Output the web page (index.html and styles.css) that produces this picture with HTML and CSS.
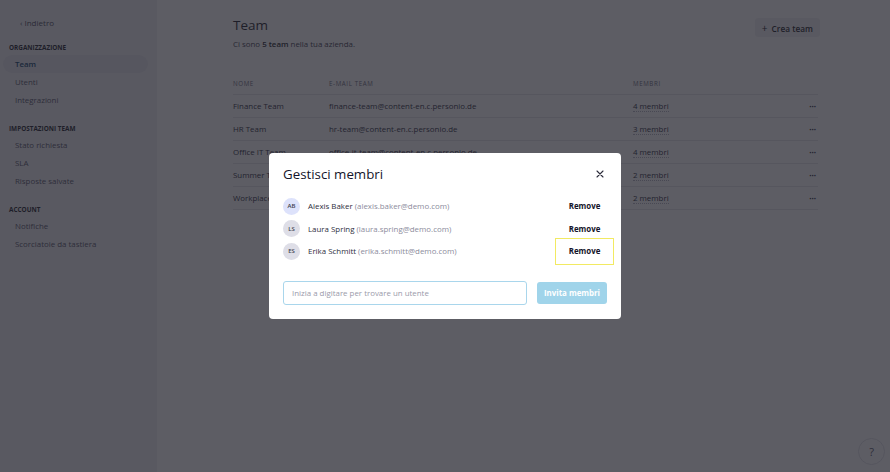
FILE: index.html
```html
<!DOCTYPE html>
<html lang="it">
<head>
<meta charset="utf-8">
<title>Team</title>
<link rel="stylesheet" href="styles.css">
</head>
<body>
<div class="app">
  <aside class="sidebar">
    <a class="back">‹ Indietro</a>
    <div class="section-title">ORGANIZZAZIONE</div>
    <a class="nav-item active">Team</a>
    <a class="nav-item">Utenti</a>
    <a class="nav-item">Integrazioni</a>
    <div class="section-title">IMPOSTAZIONI TEAM</div>
    <a class="nav-item">Stato richiesta</a>
    <a class="nav-item">SLA</a>
    <a class="nav-item">Risposte salvate</a>
    <div class="section-title">ACCOUNT</div>
    <a class="nav-item">Notifiche</a>
    <a class="nav-item">Scorciatoie da tastiera</a>
  </aside>
  <main class="main">
    <div class="header">
      <div>
        <h1 class="title">Team</h1>
        <p class="subtitle">Ci sono <b>5 team</b> nella tua azienda.</p>
      </div>
      <button class="create-btn"><span class="plus">+</span> Crea team</button>
    </div>
    <div class="table">
      <div class="row head">
        <div class="c-name">NOME</div>
        <div class="c-mail">E-MAIL TEAM</div>
        <div class="c-mem">MEMBRI</div>
        <div class="c-act"></div>
      </div>
      <div class="row">
        <div class="c-name">Finance Team</div>
        <div class="c-mail">finance-team@content-en.c.personio.de</div>
        <div class="c-mem"><span class="dotted">4 membri</span></div>
        <div class="c-act">···</div>
      </div>
      <div class="row">
        <div class="c-name">HR Team</div>
        <div class="c-mail">hr-team@content-en.c.personio.de</div>
        <div class="c-mem"><span class="dotted">3 membri</span></div>
        <div class="c-act">···</div>
      </div>
      <div class="row">
        <div class="c-name">Office IT Team</div>
        <div class="c-mail">office-it-team@content-en.c.personio.de</div>
        <div class="c-mem"><span class="dotted">4 membri</span></div>
        <div class="c-act">···</div>
      </div>
      <div class="row">
        <div class="c-name">Summer Team</div>
        <div class="c-mail">summer-team@content-en.c.personio.de</div>
        <div class="c-mem"><span class="dotted">2 membri</span></div>
        <div class="c-act">···</div>
      </div>
      <div class="row">
        <div class="c-name">Workplace Team</div>
        <div class="c-mail">workplace-team@content-en.c.personio.de</div>
        <div class="c-mem"><span class="dotted">2 membri</span></div>
        <div class="c-act">···</div>
      </div>
    </div>
  </main>
</div>
<div class="help">?</div>

<div class="overlay">
  <div class="modal">
    <div class="modal-head">
      <h2 class="modal-title">Gestisci membri</h2>
      <button class="close" aria-label="Chiudi">
        <svg width="8" height="8" viewBox="0 0 8 8"><path d="M1 1L7 7M7 1L1 7" stroke="#2b2b3a" stroke-width="1.1" stroke-linecap="round"/></svg>
      </button>
    </div>
    <ul class="members">
      <li class="member">
        <span class="avatar blue">AB</span>
        <span class="m-name">Alexis Baker <span class="m-mail">(alexis.baker@demo.com)</span></span>
        <button class="remove">Remove</button>
      </li>
      <li class="member">
        <span class="avatar">LS</span>
        <span class="m-name">Laura Spring <span class="m-mail">(laura.spring@demo.com)</span></span>
        <button class="remove">Remove</button>
      </li>
      <li class="member">
        <span class="avatar">ES</span>
        <span class="m-name">Erika Schmitt <span class="m-mail">(erika.schmitt@demo.com)</span></span>
        <button class="remove focus">Remove</button>
      </li>
    </ul>
    <div class="invite">
      <input class="search" type="text" placeholder="Inizia a digitare per trovare un utente">
      <button class="invite-btn">Invita membri</button>
    </div>
  </div>
</div>
</body>
</html>
```

FILE: styles.css
```css
* { box-sizing: border-box; }
html, body { margin: 0; padding: 0; }
body {
  width: 890px;
  height: 472px;
  overflow: hidden;
  font-family: "Open Sans", "Liberation Sans", sans-serif;
  color: #1e1e2c;
  background: #fff;
  position: relative;
}
.app { display: flex; height: 472px; }

.sidebar {
  width: 157px;
  flex: none;
  background: #f1f1f4;
  padding: 16px 0 0 0;
  display: flex;
  flex-direction: column;
}
.back {
  font-size: 8px;
  color: #4a4a5a;
  padding-left: 20px;
  height: 13px;
  line-height: 13px;
  margin-bottom: 12px;
}
.section-title {
  font-size: 6.4px;
  font-weight: 700;
  color: #1e1e2c;
  padding-left: 9px;
  height: 9px;
  line-height: 9px;
  margin-top: 2px;
  margin-bottom: 2.5px;
}
.section-title ~ .section-title { margin-top: 15.5px; }
.nav-item {
  font-size: 7.9px;
  color: #55556a;
  height: 18px;
  line-height: 18px;
  margin: 0 9px 0 3px;
  border-radius: 9px;
  padding-left: 12px;
}
.nav-item.active {
  background: #e6e6ec;
  color: #10436d;
  font-weight: 600;
}

.main {
  flex: 1;
  padding: 15px 70px 0 76px;
}
.header {
  display: flex;
  justify-content: space-between;
  align-items: flex-start;
  height: 58px;
}
.title {
  margin: 0;
  font-size: 13.5px;
  font-weight: 400;
  line-height: 20px;
  color: #1e1e2c;
}
.subtitle {
  margin: 4px 0 0;
  font-size: 7.9px;
  line-height: 11px;
  color: #3e3e50;
}
.subtitle b { font-weight: 600; color: #1e1e2c; }
.create-btn {
  margin-top: 3px;
  height: 19px;
  padding: 0 7px 0 7px;
  border: 0;
  border-radius: 3px;
  background: #f1f1f4;
  font-family: inherit;
  font-size: 8.3px;
  font-weight: 600;
  color: #1e1e2c;
}
.create-btn .plus { font-weight: 400; font-size: 10px; margin-right: 2px; }

.table { display: flex; flex-direction: column; margin-right: 2px; }
.row {
  display: flex;
  align-items: center;
  height: 23px;
  border-bottom: 1px solid #e6e6ea;
  font-size: 7.9px;
  color: #2e2e3e;
}
.row.head {
  height: 22px;
  font-size: 6.2px;
  letter-spacing: 0.6px;
  color: #6a6a7c;
  font-weight: 500;
}
.c-name { width: 96px; }
.c-mail { width: 304px; }
.c-mem { flex: 1; }
.c-act { width: 20px; text-align: right; font-weight: 700; font-size: 8px; padding-right: 2px; }
.dotted { border-bottom: 1px dotted #b4b4c0; }

.help {
  position: absolute;
  left: 858px;
  top: 438px;
  width: 27px;
  height: 27px;
  border-radius: 50%;
  background: #fff;
  border: 1px solid #e2e2e8;
  display: flex;
  align-items: center;
  justify-content: center;
  font-size: 11px;
  color: #55556a;
}

.overlay {
  position: absolute;
  inset: 0;
  background: rgba(30, 30, 40, 0.72);
  display: flex;
  align-items: center;
  justify-content: center;
}
.modal {
  width: 352px;
  height: 166px;
  background: #fff;
  border-radius: 4px;
  padding: 11px 8px 14px 14px;
  display: flex;
  flex-direction: column;
}
.modal-head {
  display: flex;
  justify-content: space-between;
  align-items: center;
  height: 20px;
}
.modal-title {
  margin: 0;
  font-size: 13.3px;
  font-weight: 500;
  color: #14142a;
}
.close {
  border: 0;
  background: none;
  padding: 0;
  width: 14px;
  height: 14px;
  display: flex;
  align-items: center;
  justify-content: center;
  margin-right: 6px;
}
.members {
  list-style: none;
  margin: 11px 0 0;
  padding: 0;
}
.member {
  display: flex;
  align-items: center;
  height: 22.5px;
}
.avatar {
  width: 17px;
  height: 17px;
  border-radius: 50%;
  background: #dedee7;
  font-size: 6px;
  line-height: 1;
  font-weight: 600;
  color: #3e3e50;
  display: flex;
  align-items: center;
  justify-content: center;
  margin-right: 8px;
  flex: none;
}
.avatar.blue { background: #dde2fb; }
.m-name { flex: 1; font-size: 7.9px; color: #2e2e3e; }
.m-mail { color: #8c8c9c; }
.remove {
  border: 0;
  background: none;
  font-family: inherit;
  font-size: 7.9px;
  font-weight: 700;
  color: #14142a;
  padding: 0;
  width: 57px;
  height: 22px;
  text-align: center;
}
.remove.focus {
  outline: 1px solid #f2ea62;
  outline-offset: 0;
  height: 25px;
}
.invite {
  display: flex;
  gap: 10px;
  margin-top: auto;
  align-items: center;
}
.search {
  width: 244px;
  height: 24px;
  border: 1px solid #a9d6ec;
  border-radius: 3px;
  padding: 0 8px;
  font-family: inherit;
  font-size: 7.9px;
  color: #2e2e3e;
  outline: none;
}
.search::placeholder { color: #9a9aaa; }
.invite-btn {
  width: 70px;
  height: 22px;
  border: 0;
  border-radius: 3px;
  background: #a0d4ea;
  color: #fff;
  font-family: inherit;
  font-size: 7.9px;
  font-weight: 700;
  padding: 0;
}
```
